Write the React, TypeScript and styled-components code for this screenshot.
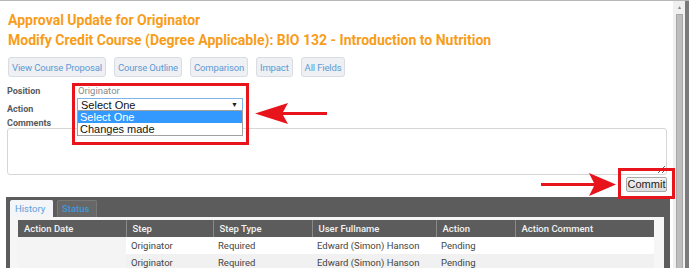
import React from 'react';
import styled, { createGlobalStyle } from 'styled-components';

const GlobalStyle = createGlobalStyle`
  html, body {
    margin: 0;
    padding: 0;
    background: #fff;
    overflow: hidden;
  }
  body {
    font-family: Roboto, 'Open Sans', sans-serif;
    color: #444;
  }
`;

const tabs = ['View Course Proposal', 'Course Outline', 'Comparison', 'Impact', 'All Fields'];

const columns = [
  { title: 'Action Date', width: 108 },
  { title: 'Step', width: 87 },
  { title: 'Step Type', width: 99 },
  { title: 'User Fullname', width: 124 },
  { title: 'Action', width: 79 },
  { title: 'Action Comment', width: 139 },
];

const rows = [
  ['', 'Originator', 'Required', 'Edward (Simon) Hanson', 'Pending', ''],
  ['', 'Originator', 'Required', 'Edward (Simon) Hanson', 'Pending', ''],
];

export default function App() {
  return (
    <>
      <GlobalStyle />
      <SScreen>
        <SMain>
          <STitle>Approval Update for Originator</STitle>
          <STitle>Modify Credit Course (Degree Applicable): BIO 132 - Introduction to Nutrition</STitle>

          <SButtonRow>
            {tabs.map((t) => (
              <SLinkButton key={t}>{t}</SLinkButton>
            ))}
          </SButtonRow>

          <SFieldRow $height={14} $top={7}>
            <SLabel>Position</SLabel>
            <SValue>Originator</SValue>
          </SFieldRow>
          <SFieldRow $height={16}>
            <SLabel $offset={4}>Action</SLabel>
            <SSelectWrap>
              <SSelect>
                <span>Select One</span>
                <SCaret>▼</SCaret>
              </SSelect>
              <SOptions>
                <SOption $active>Select One</SOption>
                <SOption>Changes made</SOption>
              </SOptions>
            </SSelectWrap>
          </SFieldRow>
          <SLabel $offset={2}>Comments</SLabel>
          <SComments />

          <SCommitRow>
            <SCommit>Commit</SCommit>
          </SCommitRow>

          <SPanel>
            <STabs>
              <STab $active>History</STab>
              <STab>Status</STab>
            </STabs>
            <STabBody>
              <STable>
                <colgroup>
                  {columns.map((c) => (
                    <col key={c.title} style={{ width: c.width }} />
                  ))}
                </colgroup>
                <thead>
                  <tr>
                    {columns.map((c) => (
                      <SHeadCell key={c.title}>{c.title}</SHeadCell>
                    ))}
                  </tr>
                </thead>
                <tbody>
                  {rows.map((r, i) => (
                    <SRow key={i} $alt={i % 2 === 1}>
                      {r.map((cell, j) => (
                        <SCell key={j}>{cell}</SCell>
                      ))}
                    </SRow>
                  ))}
                </tbody>
              </STable>
            </STabBody>
          </SPanel>
        </SMain>

        <SScrollbar>
          <SScrollUp>▲</SScrollUp>
          <SThumb />
        </SScrollbar>

        {/* red annotations drawn over the screenshot */}
        <SRedBox $left={72} $top={82} $width={177} $height={62} />
        <SArrow $left={255} $top={101} width="72" height="23" viewBox="0 0 72 23">
          <polygon points="0,11.5 33,1 28,10 72,10 72,13 28,13 33,22" fill="#e8141b" />
        </SArrow>
        <SRedBox $left={618} $top={167} $width={57} $height={31} />
        <SArrow $left={541} $top={171} width="75" height="25" viewBox="0 0 75 25">
          <polygon points="75,12.5 48,1 53,11 0,11 0,14 53,14 48,24" fill="#e8141b" />
        </SArrow>
      </SScreen>
    </>
  );
}

const SScreen = styled.div`
  position: relative;
  display: flex;
  width: 689px;
  height: 268px;
  box-sizing: border-box;
  border-top: 1px solid #b8b8b8;
  overflow: hidden;
`;

const SMain = styled.div`
  flex: 1;
  min-width: 0;
  padding: 9px 6px 0 7px;
  display: flex;
  flex-direction: column;

  & > * {
    flex-shrink: 0;
  }
`;

const STitle = styled.h1`
  margin: 0 0 0 1px;
  font-size: 14px;
  line-height: 20px;
  font-weight: 700;
  color: #f89d1a;
  white-space: nowrap;
`;

const SButtonRow = styled.div`
  display: flex;
  gap: 8px;
  margin: 7px 0 0 1px;
`;

const SLinkButton = styled.button`
  height: 20px;
  padding: 0 3px;
  border: 1px solid #d8dde3;
  border-radius: 3px;
  background: #eef0f3;
  color: #5b9bd5;
  font-family: Roboto, sans-serif;
  font-size: 9.5px;
  letter-spacing: -0.15px;
  cursor: pointer;
`;

const SFieldRow = styled.div<{ $height: number; $top?: number }>`
  display: flex;
  align-items: flex-start;
  height: ${({ $height }) => $height}px;
  margin-top: ${({ $top }) => $top ?? 0}px;
`;

const SLabel = styled.div<{ $offset?: number }>`
  box-sizing: border-box;
  width: 70px;
  flex-shrink: 0;
  height: 14px;
  padding-top: ${({ $offset }) => $offset ?? 0}px;
  font-size: 9px;
  line-height: 14px;
  font-weight: 700;
  color: #5a5a5a;
  white-space: nowrap;
`;

const SValue = styled.div`
  font-size: 9.5px;
  line-height: 14px;
  color: #8a8a8a;
  padding-left: 1px;
`;

const SSelectWrap = styled.div`
  position: relative;
  width: 166px;
`;

const SSelect = styled.div`
  display: flex;
  justify-content: space-between;
  align-items: center;
  box-sizing: border-box;
  height: 13px;
  padding: 0 4px 0 3px;
  border: 1px solid #7eb4ea;
  background: #fff;
  font-family: 'Liberation Sans', Arial, sans-serif;
  font-size: 11px;
  color: #111;
`;

const SCaret = styled.span`
  font-size: 7px;
  color: #222;
`;

const SOptions = styled.div`
  position: absolute;
  top: 12px;
  left: 0;
  right: 0;
  z-index: 2;
  border: 1px solid #a0a0a0;
  background: #fff;
`;

const SOption = styled.div<{ $active?: boolean }>`
  height: 12px;
  padding-left: 2px;
  font-family: 'Liberation Sans', Arial, sans-serif;
  font-size: 11px;
  line-height: 12px;
  background: ${({ $active }) => ($active ? '#3399ff' : '#fff')};
  color: ${({ $active }) => ($active ? '#fff' : '#111')};
`;

const SComments = styled.textarea`
  display: block;
  box-sizing: border-box;
  width: 100%;
  height: 47px;
  margin: 0;
  border: 1px solid #d6d6d6;
  border-radius: 3px;
  resize: vertical;
  font-family: Roboto, sans-serif;
`;

const SCommitRow = styled.div`
  display: flex;
  justify-content: flex-end;
  margin-top: 2px;
`;

const SCommit = styled.button`
  height: 15px;
  width: 41px;
  padding: 0;
  border: 1px solid #a9a9a9;
  border-radius: 2px;
  background: linear-gradient(#f6f6f6, #dcdcdc);
  font-family: 'Liberation Sans', Arial, sans-serif;
  font-size: 11px;
  line-height: 13px;
  color: #222;
`;

const SPanel = styled.div`
  flex: 1 0 auto;
  margin: 5px -3px 0 -1px;
  padding: 3px 6px 0 4px;
  background: #5c5c5c;
  display: flex;
  flex-direction: column;
`;

const STabs = styled.div`
  display: flex;
  gap: 4px;
  height: 17px;
`;

const STab = styled.div<{ $active?: boolean }>`
  box-sizing: border-box;
  width: ${({ $active }) => ($active ? 43 : 40)}px;
  padding-left: 4px;
  border: 1px solid ${({ $active }) => ($active ? '#f3f5f8' : '#787878')};
  border-bottom: none;
  border-radius: 2px 2px 0 0;
  background: ${({ $active }) => ($active ? '#f3f5f8' : '#676767')};
  color: ${({ $active }) => ($active ? '#5c9fd8' : '#3f97dc')};
  font-size: 9.5px;
  line-height: 16px;
  font-weight: ${({ $active }) => ($active ? 400 : 500)};
`;

const STabBody = styled.div`
  flex: 1;
  background: #f6f6f6;
  padding: 3px 10px 0 8px;
`;

const STable = styled.table`
  width: 636px;
  border-collapse: collapse;
  table-layout: fixed;
  font-size: 9.5px;
`;

const SHeadCell = styled.th`
  height: 17px;
  padding: 0 0 0 6px;
  text-align: left;
  background: #5c5c5c;
  color: #f2f2f2;
  font-weight: 500;
  border-left: 1px solid #8a8a8a;
  &:first-child {
    border-left: none;
  }
`;

const SRow = styled.tr<{ $alt?: boolean }>`
  background: ${({ $alt }) => ($alt ? '#f1f1f1' : '#fff')};
`;

const SCell = styled.td`
  height: 17px;
  padding: 0 0 0 5px;
  color: #444;
  white-space: nowrap;
  &:first-child {
    background: #f4f4f4;
  }
`;

const SScrollbar = styled.div`
  box-sizing: border-box;
  flex: 0 0 16px;
  display: flex;
  flex-direction: column;
  padding: 0 2px 0 3px;
  background: #f0f0f0;
  border-right: 4px solid #7a7a7a;
`;

const SScrollUp = styled.div`
  height: 13px;
  font-size: 5px;
  line-height: 13px;
  text-align: center;
  color: #888;
`;

const SThumb = styled.div`
  flex: 1;
  background: #bdbdbd;
  border: 1px solid #a9a9a9;
  border-bottom: none;
`;

const SRedBox = styled.div<{ $left: number; $top: number; $width: number; $height: number }>`
  position: absolute;
  left: ${({ $left }) => $left}px;
  top: ${({ $top }) => $top}px;
  width: ${({ $width }) => $width}px;
  height: ${({ $height }) => $height}px;
  box-sizing: border-box;
  border: 3px solid #e8141b;
  pointer-events: none;
  z-index: 3;
`;

const SArrow = styled.svg<{ $left: number; $top: number }>`
  position: absolute;
  left: ${({ $left }) => $left}px;
  top: ${({ $top }) => $top}px;
  z-index: 3;
`;
